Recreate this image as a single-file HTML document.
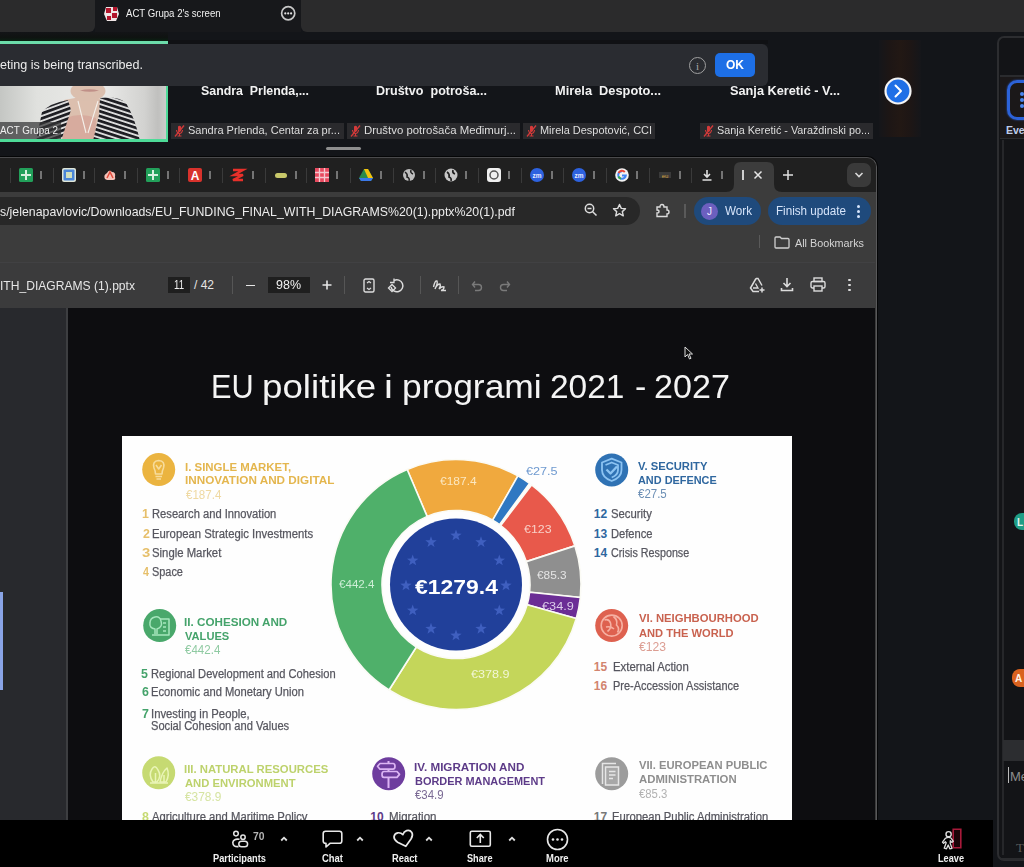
<!DOCTYPE html>
<html><head><meta charset="utf-8">
<style>
*{margin:0;padding:0;box-sizing:border-box}
html,body{width:1024px;height:867px;overflow:hidden;background:#131519;font-family:"Liberation Sans",sans-serif;position:relative}
.a{position:absolute}
.t{position:absolute;white-space:pre}
svg{position:absolute;overflow:visible}
</style></head><body>
<div class="a" style="left:0;top:0;width:95px;height:32px;background:#2b2b2c;border-radius:0 0 6px 0"></div>
<div class="a" style="left:95px;top:0;width:206px;height:32px;background:#17181b"></div>
<div class="a" style="left:301px;top:0;width:723px;height:32px;background:#2b2b2c;border-radius:0 0 0 6px"></div>
<svg style="left:103px;top:5px" width="17" height="18" viewBox="0 0 17 18">
<path d="M3 2 L14 2 L16 9 L13 16 L4 16 L1 9 Z" fill="#f0e6e6"/>
<rect x="3" y="3" width="5" height="5" fill="#b3152c"/><rect x="9" y="8" width="5" height="5" fill="#b3152c"/>
<rect x="4" y="11" width="4" height="4" fill="#b3152c"/><rect x="10" y="2" width="4" height="4" fill="#b3152c"/>
</svg>
<svg style="left:280px;top:5px" width="17" height="17" viewBox="0 0 17 17"><circle cx="8.2" cy="8.3" r="6.6" fill="none" stroke="#c8c8c8" stroke-width="1.7"/><circle cx="5.3" cy="8.4" r="1.1" fill="#e0e0e0"/><circle cx="8.2" cy="8.4" r="1.1" fill="#e0e0e0"/><circle cx="11.1" cy="8.4" r="1.1" fill="#e0e0e0"/></svg>
<div class="a" style="left:168px;top:40px;width:600px;height:4px;background:#101114"></div>
<div class="a" style="left:0;top:41px;width:168px;height:101px;overflow:hidden"><div class="a" style="left:0;top:0;width:168px;height:101px;filter:blur(0.6px)"><svg style="left:0;top:0" width="168" height="101" viewBox="0 41 168 101">
<defs>
<linearGradient id="vbg" x1="0" x2="1" y1="0" y2="0"><stop offset="0" stop-color="#c4c6c3"/><stop offset="0.22" stop-color="#e0e1de"/><stop offset="0.6" stop-color="#ebebe9"/><stop offset="0.86" stop-color="#d2d2d0"/><stop offset="0.94" stop-color="#c0c0be"/><stop offset="1" stop-color="#cfcfcd"/></linearGradient>
<pattern id="strL" width="6" height="4.6" patternUnits="userSpaceOnUse" patternTransform="rotate(-20)"><rect width="6" height="4.6" fill="#dcdcdc"/><rect width="6" height="2.7" fill="#1c1c21"/></pattern>
<pattern id="strR" width="6" height="4.6" patternUnits="userSpaceOnUse" patternTransform="rotate(18)"><rect width="6" height="4.6" fill="#dcdcdc"/><rect width="6" height="2.7" fill="#1c1c21"/></pattern>
</defs>
<rect x="0" y="41" width="168" height="101" fill="url(#vbg)"/>
<path d="M64 100 Q84 95 103 99 L97 141 L58 141 Z" fill="#dcbfae"/>
<path d="M66 118 Q80 112 96 118 L95 141 L62 141 Z" fill="#d7ab9e"/>
<ellipse cx="88" cy="91" rx="17.5" ry="10" fill="#dbbfae"/>
<path d="M80 90.5 Q89 88 99 90.5 Q90 93 80 90.5 Z" fill="#c09088"/>
<path d="M36 141 L42 112 Q50 103 68 100 L71 110 L61 141 Z" fill="url(#strL)"/>
<path d="M100 98 Q118 96 126 103 Q135 118 140 141 L93 141 L99 115 Z" fill="url(#strR)"/>
<path d="M78 101 L86 133 M98 101 L88 133" fill="none" stroke="#f4f0ea" stroke-width="1.1"/>
</svg></div></div>
<div class="a" style="left:0;top:122px;width:61px;height:17px;background:rgba(52,52,54,0.72)"></div>
<div class="a" style="left:0;top:32px;width:168px;height:9px;background:linear-gradient(180deg,#131417,#0f1311 60%,#0a2012)"></div>
<div class="a" style="left:166px;top:41px;width:2px;height:101px;background:#4ddb98"></div>
<div class="a" style="left:0;top:40.5px;width:168px;height:3.5px;background:#6cdcaa"></div>
<div class="a" style="left:0;top:139px;width:168px;height:3px;background:#4ddb98"></div>
<div class="a" style="left:0;top:44px;width:768px;height:42px;background:#2a2c31;border-radius:0 6px 6px 0"></div>
<div class="a" style="left:689px;top:57px;width:17px;height:17px;border-radius:50%;border:1.5px solid #a0a0a0"></div>
<div class="a" style="left:715px;top:53px;width:40px;height:24px;border-radius:5px;background:#1d6fe6"></div>
<div class="a" style="left:879px;top:40px;width:42px;height:97px;background:linear-gradient(90deg,#15161a,#1d1615 25%,#221814 50%,#1d1615 75%,#15161a)"></div>
<svg style="left:884px;top:77px" width="28" height="28" viewBox="0 0 28 28">
<circle cx="14" cy="14" r="12.5" fill="#1f6fe6" stroke="#f4f4f4" stroke-width="2.2"/>
<path d="M11.5 8.5 L17 14 L11.5 19.5" fill="none" stroke="#fff" stroke-width="2" stroke-linecap="round" stroke-linejoin="round"/>
</svg>
<div class="a" style="left:171px;top:123px;width:173px;height:16px;background:#2a2a2d"></div>
<svg style="left:173px;top:124px" width="13" height="14" viewBox="0 0 13 14">
<path d="M5 2.5 Q6.5 1 8 2.5 L8 7 Q6.5 8.5 5 7 Z" fill="#d43a3a"/>
<path d="M3.5 6 Q4 9.5 6.5 9.5 Q9 9.5 9.5 6 M6.5 9.5 L6.5 12 M4.5 12 L8.5 12" fill="none" stroke="#d43a3a" stroke-width="1.1"/>
<path d="M2 12.5 L11 1.5" stroke="#d43a3a" stroke-width="1.3"/>
</svg>
<div class="a" style="left:347px;top:123px;width:173px;height:16px;background:#2a2a2d"></div>
<svg style="left:349px;top:124px" width="13" height="14" viewBox="0 0 13 14">
<path d="M5 2.5 Q6.5 1 8 2.5 L8 7 Q6.5 8.5 5 7 Z" fill="#d43a3a"/>
<path d="M3.5 6 Q4 9.5 6.5 9.5 Q9 9.5 9.5 6 M6.5 9.5 L6.5 12 M4.5 12 L8.5 12" fill="none" stroke="#d43a3a" stroke-width="1.1"/>
<path d="M2 12.5 L11 1.5" stroke="#d43a3a" stroke-width="1.3"/>
</svg>
<div class="a" style="left:523px;top:123px;width:132px;height:16px;background:#2a2a2d"></div>
<svg style="left:525px;top:124px" width="13" height="14" viewBox="0 0 13 14">
<path d="M5 2.5 Q6.5 1 8 2.5 L8 7 Q6.5 8.5 5 7 Z" fill="#d43a3a"/>
<path d="M3.5 6 Q4 9.5 6.5 9.5 Q9 9.5 9.5 6 M6.5 9.5 L6.5 12 M4.5 12 L8.5 12" fill="none" stroke="#d43a3a" stroke-width="1.1"/>
<path d="M2 12.5 L11 1.5" stroke="#d43a3a" stroke-width="1.3"/>
</svg>
<div class="a" style="left:700px;top:123px;width:173px;height:16px;background:#2a2a2d"></div>
<svg style="left:702px;top:124px" width="13" height="14" viewBox="0 0 13 14">
<path d="M5 2.5 Q6.5 1 8 2.5 L8 7 Q6.5 8.5 5 7 Z" fill="#d43a3a"/>
<path d="M3.5 6 Q4 9.5 6.5 9.5 Q9 9.5 9.5 6 M6.5 9.5 L6.5 12 M4.5 12 L8.5 12" fill="none" stroke="#d43a3a" stroke-width="1.1"/>
<path d="M2 12.5 L11 1.5" stroke="#d43a3a" stroke-width="1.3"/>
</svg>
<div class="a" style="left:326px;top:147px;width:35px;height:3px;border-radius:2px;background:#8e8e8e"></div>
<div class="a" style="left:997px;top:36px;width:30px;height:825px;border:2px solid #2c2d30;border-right:none;border-radius:7px 0 0 7px;background:#131417"></div>
<div class="a" style="left:1002px;top:140px;width:1.5px;height:715px;background:#26272a"></div>
<div class="a" style="left:1000px;top:75px;width:24px;height:1.5px;background:#2a2b2e"></div>
<div class="a" style="left:1000px;top:137px;width:24px;height:2px;background:#2a2b2e"></div>
<div class="a" style="left:1000px;top:77px;width:24px;height:61px;background:#1b1819"></div>
<div class="a" style="left:1007px;top:80px;width:26px;height:40px;border-radius:10px;border:3px solid #2c62d8;box-shadow:0 0 2px #2c62d8"></div>
<div class="a" style="left:1020px;top:92px;width:4px;height:4px;border-radius:2px;background:#4a86f0"></div><div class="a" style="left:1020px;top:98px;width:4px;height:4px;border-radius:2px;background:#4a86f0"></div><div class="a" style="left:1020px;top:104px;width:4px;height:4px;border-radius:2px;background:#4a86f0"></div>
<div class="a" style="left:1014px;top:513px;width:20px;height:17px;border-radius:8px;background:#1f9e86"></div>
<div class="a" style="left:1012px;top:669px;width:20px;height:18px;border-radius:8px;background:#d9621f"></div>
<div class="a" style="left:1003px;top:740px;width:21px;height:21px;background:#2c2d30"></div>
<div class="a" style="left:1008px;top:767px;width:1.2px;height:16px;background:#bbb"></div>
<div class="a" style="left:1000px;top:858px;width:24px;height:2px;background:#2a2b2e"></div>
<div class="a" style="left:0;top:156px;width:878px;height:664px;background:#000;border-radius:0 11px 0 0;opacity:0.7"></div>
<div class="a" style="left:0;top:157px;width:877px;height:663px;background:#3c3c3c;border-top:1px solid #4a4a4c;border-right:1.5px solid #58585a;border-radius:0 10px 0 0"></div>
<div class="a" style="left:0;top:158px;width:875.5px;height:34px;background:#202020;border-radius:0 9px 0 0"></div>
<div class="a" style="left:10px;top:168px;width:1px;height:15px;background:#3a3a3a"></div>
<div class="a" style="left:53px;top:168px;width:1px;height:15px;background:#3a3a3a"></div>
<div class="a" style="left:94px;top:168px;width:1px;height:15px;background:#3a3a3a"></div>
<div class="a" style="left:137px;top:168px;width:1px;height:15px;background:#3a3a3a"></div>
<div class="a" style="left:179px;top:168px;width:1px;height:15px;background:#3a3a3a"></div>
<div class="a" style="left:222px;top:168px;width:1px;height:15px;background:#3a3a3a"></div>
<div class="a" style="left:265px;top:168px;width:1px;height:15px;background:#3a3a3a"></div>
<div class="a" style="left:306px;top:168px;width:1px;height:15px;background:#3a3a3a"></div>
<div class="a" style="left:350px;top:168px;width:1px;height:15px;background:#3a3a3a"></div>
<div class="a" style="left:393px;top:168px;width:1px;height:15px;background:#3a3a3a"></div>
<div class="a" style="left:435px;top:168px;width:1px;height:15px;background:#3a3a3a"></div>
<div class="a" style="left:478px;top:168px;width:1px;height:15px;background:#3a3a3a"></div>
<div class="a" style="left:521px;top:168px;width:1px;height:15px;background:#3a3a3a"></div>
<div class="a" style="left:563px;top:168px;width:1px;height:15px;background:#3a3a3a"></div>
<div class="a" style="left:606px;top:168px;width:1px;height:15px;background:#3a3a3a"></div>
<div class="a" style="left:649px;top:168px;width:1px;height:15px;background:#3a3a3a"></div>
<div class="a" style="left:691px;top:168px;width:1px;height:15px;background:#3a3a3a"></div>
<svg style="left:19.0px;top:168.0px" width="14" height="14" viewBox="0 0 14 14"><rect x="0" y="0" width="14" height="14" rx="1.5" fill="#22a05a"/><rect x="6" y="2" width="2" height="10" fill="#d8f0de"/><rect x="2" y="6" width="10" height="2" fill="#d8f0de"/></svg>
<svg style="left:62.0px;top:168.0px" width="14" height="14" viewBox="0 0 14 14"><rect x="0" y="0" width="14" height="14" rx="2" fill="#dfe6d8"/><rect x="1.5" y="1.5" width="11" height="11" rx="1" fill="#4a86d8"/><rect x="4" y="4" width="6" height="6" fill="#cfe0c0"/></svg>
<svg style="left:103.0px;top:168.0px" width="14" height="14" viewBox="0 0 14 14"><path d="M2 11 Q0 7 4 5 Q6 1 9 4 Q13 4 12 9 Q13 12 10 12 L4 12 Z" fill="#f6c2b8"/><path d="M4 10 L7 4 L10 10" stroke="#e24b3b" stroke-width="1.5" fill="none"/></svg>
<svg style="left:146.0px;top:168.0px" width="14" height="14" viewBox="0 0 14 14"><rect x="0" y="0" width="14" height="14" rx="1.5" fill="#22a05a"/><rect x="6" y="2" width="2" height="10" fill="#d8f0de"/><rect x="2" y="6" width="10" height="2" fill="#d8f0de"/></svg>
<svg style="left:188.0px;top:168.0px" width="14" height="14" viewBox="0 0 14 14"><rect x="0" y="0" width="14" height="14" rx="2" fill="#d8322c"/><text x="7" y="12" font-family="Liberation Sans" font-weight="bold" font-size="12" fill="#fff" text-anchor="middle">A</text></svg>
<svg style="left:231.0px;top:168.0px" width="14" height="14" viewBox="0 0 14 14"><path d="M2 2 L12 2 L3 7 L12 7 L2 12 L12 12" stroke="#e8302a" stroke-width="2.4" fill="none"/></svg>
<svg style="left:274.0px;top:168.0px" width="14" height="14" viewBox="0 0 14 14"><rect x="1" y="5" width="12" height="5" rx="2.5" fill="#c8c86a"/></svg>
<svg style="left:315.0px;top:168.0px" width="14" height="14" viewBox="0 0 14 14"><rect x="0" y="0" width="14" height="14" fill="#e84a5f"/><path d="M0 4.5H14M0 9.5H14M4.5 0V14M9.5 0V14" stroke="#f4c8cf" stroke-width="1.3"/></svg>
<svg style="left:359.0px;top:168.0px" width="14" height="14" viewBox="0 0 14 14"><path d="M5 1 L9 1 L14 10 L12 13 L2 13 L0 10 Z" fill="#2a8a4a"/><path d="M5 1 L9 1 L14 10 L9 10 Z" fill="#f4c20d"/><path d="M0 10 L14 10 L12 13 L2 13 Z" fill="#3b78e7"/></svg>
<svg style="left:402.0px;top:168.0px" width="14" height="14" viewBox="0 0 14 14"><circle cx="7" cy="7" r="6" fill="#bdbdbd"/><path d="M3 4 Q6 6 5 9 Q8 10 7 13 M9 2 Q8 5 11 6" stroke="#202020" stroke-width="1.5" fill="none"/></svg>
<svg style="left:444.0px;top:168.0px" width="14" height="14" viewBox="0 0 14 14"><circle cx="7" cy="7" r="6.5" fill="#c8c8c8"/><path d="M3 4 Q6 6 5 9 Q8 10 7 13 M9 2 Q8 5 11 6" stroke="#202020" stroke-width="1.6" fill="none"/></svg>
<svg style="left:487.0px;top:168.0px" width="14" height="14" viewBox="0 0 14 14"><rect x="0" y="0" width="14" height="14" rx="3" fill="#f0f0f0"/><circle cx="7" cy="7" r="4" fill="none" stroke="#555" stroke-width="1.5"/></svg>
<svg style="left:530.0px;top:168.0px" width="14" height="14" viewBox="0 0 14 14"><circle cx="7" cy="7" r="7" fill="#2d62e0"/><text x="7" y="9.5" font-family="Liberation Sans" font-size="6.5" font-weight="bold" fill="#e6ecff" text-anchor="middle">zm</text></svg>
<svg style="left:572.0px;top:168.0px" width="14" height="14" viewBox="0 0 14 14"><circle cx="7" cy="7" r="7" fill="#2d62e0"/><text x="7" y="9.5" font-family="Liberation Sans" font-size="6.5" font-weight="bold" fill="#e6ecff" text-anchor="middle">zm</text></svg>
<svg style="left:615.0px;top:168.0px" width="14" height="14" viewBox="0 0 14 14"><circle cx="7" cy="7" r="6.8" fill="#f2f2f2"/><path d="M7 3.2 A3.8 3.8 0 1 0 10.8 7.5 L7 7.5" stroke="#4285f4" stroke-width="2" fill="none"/><path d="M3.6 5 A3.8 3.8 0 0 1 9.8 4" stroke="#ea4335" stroke-width="2" fill="none"/><path d="M3.4 8.5 A3.8 3.8 0 0 0 6 10.7" stroke="#34a853" stroke-width="2" fill="none"/></svg>
<svg style="left:658.0px;top:168.0px" width="14" height="14" viewBox="0 0 14 14"><rect x="1" y="4" width="12" height="6" fill="#3a3a3a"/><text x="7" y="9.5" font-family="Liberation Sans" font-size="6" fill="#d4a040" text-anchor="middle">eu</text></svg>
<svg style="left:700.0px;top:168.0px" width="14" height="14" viewBox="0 0 14 14"><path d="M7 2 L7 9 M4 6 L7 9 L10 6 M2.5 12 L11.5 12" stroke="#e0e0e0" stroke-width="1.6" fill="none"/></svg>
<div class="a" style="left:40px;top:171px;width:1.5px;height:8px;background:#8a8a8a;opacity:0.8"></div>
<div class="a" style="left:83px;top:171px;width:1.5px;height:8px;background:#8a8a8a;opacity:0.8"></div>
<div class="a" style="left:124px;top:171px;width:1.5px;height:8px;background:#8a8a8a;opacity:0.8"></div>
<div class="a" style="left:167px;top:171px;width:1.5px;height:8px;background:#8a8a8a;opacity:0.8"></div>
<div class="a" style="left:209px;top:171px;width:1.5px;height:8px;background:#8a8a8a;opacity:0.8"></div>
<div class="a" style="left:252px;top:171px;width:1.5px;height:8px;background:#8a8a8a;opacity:0.8"></div>
<div class="a" style="left:295px;top:171px;width:1.5px;height:8px;background:#8a8a8a;opacity:0.8"></div>
<div class="a" style="left:336px;top:171px;width:1.5px;height:8px;background:#8a8a8a;opacity:0.8"></div>
<div class="a" style="left:380px;top:171px;width:1.5px;height:8px;background:#8a8a8a;opacity:0.8"></div>
<div class="a" style="left:423px;top:171px;width:1.5px;height:8px;background:#8a8a8a;opacity:0.8"></div>
<div class="a" style="left:465px;top:171px;width:1.5px;height:8px;background:#8a8a8a;opacity:0.8"></div>
<div class="a" style="left:508px;top:171px;width:1.5px;height:8px;background:#8a8a8a;opacity:0.8"></div>
<div class="a" style="left:551px;top:171px;width:1.5px;height:8px;background:#8a8a8a;opacity:0.8"></div>
<div class="a" style="left:593px;top:171px;width:1.5px;height:8px;background:#8a8a8a;opacity:0.8"></div>
<div class="a" style="left:636px;top:171px;width:1.5px;height:8px;background:#8a8a8a;opacity:0.8"></div>
<div class="a" style="left:679px;top:171px;width:1.5px;height:8px;background:#8a8a8a;opacity:0.8"></div>
<div class="a" style="left:721px;top:171px;width:1.5px;height:8px;background:#8a8a8a;opacity:0.8"></div>
<svg style="left:726px;top:161px" width="56" height="31" viewBox="0 0 56 31"><path d="M0 31 Q8 31 8 23 L8 8 Q8 1 15 1 L41 1 Q48 1 48 8 L48 23 Q48 31 56 31 Z" fill="#3c3c3c"/></svg>
<div class="a" style="left:742px;top:170px;width:1.6px;height:10px;background:#d0d0d0"></div>
<svg style="left:753px;top:170px" width="10" height="10" viewBox="0 0 10 10"><path d="M1.5 1.5L8.5 8.5M8.5 1.5L1.5 8.5" stroke="#e6e6e6" stroke-width="1.5"/></svg>
<svg style="left:782px;top:169px" width="12" height="12" viewBox="0 0 12 12"><path d="M6 1V11M1 6H11" stroke="#e0e0e0" stroke-width="1.5"/></svg>
<div class="a" style="left:847px;top:163px;width:24px;height:24px;border-radius:7px;background:#3a3a3a"></div>
<svg style="left:854px;top:171px" width="10" height="8" viewBox="0 0 10 8"><path d="M1.5 2L5 5.5L8.5 2" stroke="#d8d8d8" stroke-width="1.6" fill="none"/></svg>
<div class="a" style="left:0;top:197px;width:640px;height:28px;background:#282828;border-radius:0 14px 14px 0"></div>
<svg style="left:584px;top:203px" width="14" height="14" viewBox="0 0 14 14"><circle cx="5.5" cy="5.5" r="4.2" stroke="#dcdcdc" stroke-width="1.5" fill="none"/><path d="M8.7 8.7L12.5 12.5M3.5 5.5H7.5" stroke="#dcdcdc" stroke-width="1.5"/></svg>
<svg style="left:612px;top:203px" width="15" height="15" viewBox="0 0 15 15"><path d="M7.5 1.5L9.3 5.4L13.5 5.8L10.3 8.6L11.3 12.8L7.5 10.6L3.7 12.8L4.7 8.6L1.5 5.8L5.7 5.4Z" stroke="#dcdcdc" stroke-width="1.4" fill="none" stroke-linejoin="round"/></svg>
<svg style="left:655px;top:203px" width="15" height="15" viewBox="0 0 15 15"><path d="M2 4H5Q5 1.5 7 1.5Q9 1.5 9 4H12V7Q14 7 14 9Q14 11 12 11V13.5H2V10Q4 10 4 8.5Q4 7 2 7Z" stroke="#dcdcdc" stroke-width="1.4" fill="none"/></svg>
<div class="a" style="left:684px;top:204px;width:1.5px;height:14px;background:#5a5a5a"></div>
<div class="a" style="left:694px;top:197px;width:67px;height:28px;border-radius:14px;background:#1f4a7c"></div>
<div class="a" style="left:701px;top:203px;width:17px;height:17px;border-radius:50%;background:#6c5fbf"></div>
<div class="a" style="left:768px;top:197px;width:103px;height:28px;border-radius:14px;background:#1f4a7c"></div>
<div class="a" style="left:857px;top:205px;width:2.5px;height:2.5px;border-radius:2px;background:#d6e4fa"></div><div class="a" style="left:857px;top:210px;width:2.5px;height:2.5px;border-radius:2px;background:#d6e4fa"></div><div class="a" style="left:857px;top:215px;width:2.5px;height:2.5px;border-radius:2px;background:#d6e4fa"></div>
<div class="a" style="left:759px;top:235px;width:1.3px;height:13px;background:#5a5a5a"></div>
<svg style="left:774px;top:236px" width="16" height="13" viewBox="0 0 16 13"><path d="M1 2Q1 1 2 1H6L7.5 2.5H14Q15 2.5 15 3.5V11Q15 12 14 12H2Q1 12 1 11Z" stroke="#cfcfcf" stroke-width="1.3" fill="none"/></svg>
<div class="a" style="left:0;top:262px;width:875px;height:46px;background:#3b3b3c;border-top:1px solid #414143"></div>
<div class="a" style="left:168px;top:277px;width:22px;height:16px;background:#1f1f1f"></div>
<div class="a" style="left:232px;top:276px;width:1.3px;height:18px;background:#565656"></div>
<div class="a" style="left:344px;top:276px;width:1.3px;height:18px;background:#565656"></div>
<div class="a" style="left:420px;top:276px;width:1.3px;height:18px;background:#565656"></div>
<div class="a" style="left:458px;top:276px;width:1.3px;height:18px;background:#565656"></div>
<div class="a" style="left:245.5px;top:284.5px;width:9px;height:1.6px;background:#e6e6e6"></div>
<div class="a" style="left:268px;top:277px;width:42px;height:16px;background:#1f1f1f"></div>
<svg style="left:322px;top:280px" width="10" height="10" viewBox="0 0 10 10"><path d="M5 0.5V9.5M0.5 5H9.5" stroke="#e6e6e6" stroke-width="1.6"/></svg>
<svg style="left:363px;top:278px" width="12" height="15" viewBox="0 0 12 15"><rect x="1" y="1" width="10" height="13" rx="1.5" stroke="#dcdcdc" stroke-width="1.4" fill="none"/><path d="M4 5L6 3.5L8 5M4 10L6 11.5L8 10" stroke="#dcdcdc" stroke-width="1.2" fill="none"/></svg>
<svg style="left:388px;top:278px" width="16" height="15" viewBox="0 0 16 15"><path d="M6 2.5A6 6 0 1 1 3 9" stroke="#dcdcdc" stroke-width="1.5" fill="none"/><path d="M6 0.5V4.5H2" stroke="#dcdcdc" stroke-width="1.3" fill="none"/><rect x="1.5" y="7.5" width="5" height="5" transform="rotate(45 4 10)" stroke="#dcdcdc" stroke-width="1.3" fill="none"/></svg>
<svg style="left:432px;top:278px" width="15" height="15" viewBox="0 0 15 15"><path d="M1.5 9Q3 2 5 3Q6 5 3 11Q5 6 8 6Q9 8 7 11Q10 8 12 9Q12 12 9 12.5L14 12.5" stroke="#dcdcdc" stroke-width="1.4" fill="none"/></svg>
<svg style="left:471px;top:280px" width="12" height="11" viewBox="0 0 12 11"><path d="M1.5 4.5H7.5A3 3 0 0 1 7.5 10.5H4M4 1.5L1.5 4.5L4 7.5" stroke="#7a7a7a" stroke-width="1.4" fill="none"/></svg>
<svg style="left:499px;top:280px" width="12" height="11" viewBox="0 0 12 11"><path d="M10.5 4.5H4.5A3 3 0 0 0 4.5 10.5H8M8 1.5L10.5 4.5L8 7.5" stroke="#7a7a7a" stroke-width="1.4" fill="none"/></svg>
<svg style="left:749px;top:277px" width="17" height="16" viewBox="0 0 17 16"><path d="M7 1.5L1.5 11L4 14.5H10" stroke="#dcdcdc" stroke-width="1.5" fill="none"/><path d="M7 1.5H9L13 8.5" stroke="#dcdcdc" stroke-width="1.5" fill="none"/><path d="M4 11H9L6.5 6.5" stroke="#dcdcdc" stroke-width="1.3" fill="none"/><path d="M13 10.5V15.5M10.5 13H15.5" stroke="#dcdcdc" stroke-width="1.5"/></svg>
<svg style="left:780px;top:277px" width="14" height="15" viewBox="0 0 14 15"><path d="M7 1V9.5M3.5 6L7 9.5L10.5 6" stroke="#dcdcdc" stroke-width="1.6" fill="none"/><path d="M1.5 11V13.5H12.5V11" stroke="#dcdcdc" stroke-width="1.6" fill="none"/></svg>
<svg style="left:810px;top:277px" width="16" height="15" viewBox="0 0 16 15"><rect x="4" y="1" width="8" height="3.5" stroke="#dcdcdc" stroke-width="1.4" fill="none"/><rect x="1" y="4.5" width="14" height="6.5" rx="1.5" stroke="#dcdcdc" stroke-width="1.4" fill="none"/><rect x="4" y="9" width="8" height="5" stroke="#dcdcdc" stroke-width="1.4" fill="#3a3a3a"/></svg>
<div class="a" style="left:848px;top:278.5px;width:2.5px;height:2.5px;border-radius:2px;background:#dcdcdc"></div><div class="a" style="left:848px;top:283.5px;width:2.5px;height:2.5px;border-radius:2px;background:#dcdcdc"></div><div class="a" style="left:848px;top:288.5px;width:2.5px;height:2.5px;border-radius:2px;background:#dcdcdc"></div>
<div class="a" style="left:0;top:308px;width:68px;height:512px;background:#28292d"></div>
<div class="a" style="left:66px;top:308px;width:2px;height:512px;background:#3d3e41"></div>
<div class="a" style="left:68px;top:308px;width:807px;height:512px;background:#0d0d10"></div>
<div class="a" style="left:0;top:592px;width:3px;height:98px;background:#8aa4e6"></div>
<svg style="left:684px;top:346px" width="10" height="14" viewBox="0 0 10 14"><path d="M1 1L1 11L3.5 8.5L5.5 13L7 12.3L5 8L8.5 8Z" fill="#111" stroke="#ddd" stroke-width="1"/></svg>
<div class="a" style="left:122px;top:436px;width:670px;height:384px;background:#fefefe"></div>
<svg style="left:0;top:0" width="1024" height="867" viewBox="0 0 1024 867"><path d="M407.16 469.44 A125 125 0 0 1 517.93 475.92 L492.66 520.22 A74 74 0 0 0 427.09 516.38 Z" fill="#f0a93e" stroke="#fbfbf5" stroke-width="1.6"/><path d="M517.93 475.92 A125 125 0 0 1 529.47 483.37 L499.50 524.63 A74 74 0 0 0 492.66 520.22 Z" fill="#2f78c2" stroke="#fbfbf5" stroke-width="1.6"/><path d="M531.57 484.93 A125 125 0 0 1 574.88 545.87 L526.38 561.63 A74 74 0 0 0 500.74 525.56 Z" fill="#e8594b" stroke="#fbfbf5" stroke-width="1.6"/><path d="M574.88 545.87 A125 125 0 0 1 580.32 597.57 L529.59 592.24 A74 74 0 0 0 526.38 561.63 Z" fill="#8f8f8f" stroke="#fbfbf5" stroke-width="1.6"/><path d="M580.32 597.57 A125 125 0 0 1 576.28 618.54 L527.20 604.65 A74 74 0 0 0 529.59 592.24 Z" fill="#6b2d95" stroke="#fbfbf5" stroke-width="1.6"/><path d="M576.28 618.54 A125 125 0 0 1 389.02 690.04 L416.35 646.98 A74 74 0 0 0 527.20 604.65 Z" fill="#c4d65a" stroke="#fbfbf5" stroke-width="1.6"/><path d="M389.02 690.04 A125 125 0 0 1 407.16 469.44 L427.09 516.38 A74 74 0 0 0 416.35 646.98 Z" fill="#4fb06a" stroke="#fbfbf5" stroke-width="1.6"/><circle cx="456" cy="584.5" r="66" fill="#21409a"/><polygon points="456.00,529.50 457.41,533.56 461.71,533.65 458.28,536.24 459.53,540.35 456.00,537.90 452.47,540.35 453.72,536.24 450.29,533.65 454.59,533.56" fill="#3f5fbf"/><polygon points="481.00,536.20 482.41,540.26 486.71,540.34 483.28,542.94 484.53,547.05 481.00,544.60 477.47,547.05 478.72,542.94 475.29,540.34 479.59,540.26" fill="#3f5fbf"/><polygon points="499.30,554.50 500.71,558.56 505.01,558.65 501.58,561.24 502.83,565.35 499.30,562.90 495.77,565.35 497.02,561.24 493.59,558.65 497.89,558.56" fill="#3f5fbf"/><polygon points="506.00,579.50 507.41,583.56 511.71,583.65 508.28,586.24 509.53,590.35 506.00,587.90 502.47,590.35 503.72,586.24 500.29,583.65 504.59,583.56" fill="#3f5fbf"/><polygon points="499.30,604.50 500.71,608.56 505.01,608.65 501.58,611.24 502.83,615.35 499.30,612.90 495.77,615.35 497.02,611.24 493.59,608.65 497.89,608.56" fill="#3f5fbf"/><polygon points="481.00,622.80 482.41,626.86 486.71,626.95 483.28,629.54 484.53,633.66 481.00,631.20 477.47,633.66 478.72,629.54 475.29,626.95 479.59,626.86" fill="#3f5fbf"/><polygon points="456.00,629.50 457.41,633.56 461.71,633.65 458.28,636.24 459.53,640.35 456.00,637.90 452.47,640.35 453.72,636.24 450.29,633.65 454.59,633.56" fill="#3f5fbf"/><polygon points="431.00,622.80 432.41,626.86 436.71,626.95 433.28,629.54 434.53,633.66 431.00,631.20 427.47,633.66 428.72,629.54 425.29,626.95 429.59,626.86" fill="#3f5fbf"/><polygon points="412.70,604.50 414.11,608.56 418.41,608.65 414.98,611.24 416.23,615.35 412.70,612.90 409.17,615.35 410.42,611.24 406.99,608.65 411.29,608.56" fill="#3f5fbf"/><polygon points="406.00,579.50 407.41,583.56 411.71,583.65 408.28,586.24 409.53,590.35 406.00,587.90 402.47,590.35 403.72,586.24 400.29,583.65 404.59,583.56" fill="#3f5fbf"/><polygon points="412.70,554.50 414.11,558.56 418.41,558.65 414.98,561.24 416.23,565.35 412.70,562.90 409.17,565.35 410.42,561.24 406.99,558.65 411.29,558.56" fill="#3f5fbf"/><polygon points="431.00,536.20 432.41,540.26 436.71,540.34 433.28,542.94 434.53,547.05 431.00,544.60 427.47,547.05 428.72,542.94 425.29,540.34 429.59,540.26" fill="#3f5fbf"/><circle cx="158.7" cy="469.6" r="16.5" fill="#ebb440"/><circle cx="159.7" cy="625.6" r="16.5" fill="#49a86b"/><circle cx="158.7" cy="772.8" r="16.5" fill="#c6da72"/><circle cx="388.7" cy="773.7" r="16.5" fill="#6e3d9e"/><circle cx="611.7" cy="469.9" r="16.5" fill="#2f72b4"/><circle cx="611.7" cy="625.6" r="16.5" fill="#de614f"/><circle cx="611.7" cy="773.7" r="16.5" fill="#9c9c9c"/><g fill="none" stroke="#f7dc9c" stroke-width="1.6" stroke-linejoin="round"><path d="M154 468 Q152 461 158.7 460.5 Q165.5 461 163.5 468 Q162 471 162 474 H155.5 Q155.5 471 154 468 Z"/><path d="M155.5 476.5 H162 M156.5 479 H161"/><path d="M156 465 L158.7 469 L161.5 465"/></g><g fill="none" stroke="#a6e6bd" stroke-width="1.5" stroke-linejoin="round"><path d="M155 634 V629 Q149 628 150 623 Q150 618 155 617 Q160 616 161 621 Q163 627 157 629 V634"/><path d="M160 619 H169 V635 H152"/><path d="M163 623 H166 M163 627 H166 M163 631 H166"/></g><g fill="none" stroke="#eaf5b8" stroke-width="1.5" stroke-linejoin="round"><path d="M153 782 Q148 775 152 769 Q155 764 158 770 Q162 776 157 782 Z"/><path d="M160 782 Q162 772 167 768 Q170 775 166 782 Z"/><path d="M150 783 H168 M155.5 773 V783 M164 775 V783"/></g><g fill="none" stroke="#dcb4f4" stroke-width="1.7" stroke-linejoin="round"><path d="M380 763.5 H393 Q395 763.5 395 766.3 Q395 769.2 393 769.2 H380 L377.5 766.3 Z"/><path d="M384 771.5 H397 L399.5 774.4 L397 777.4 H384 Q382 777.4 382 774.4 Q382 771.5 384 771.5 Z"/><path d="M388.5 761 V763.5 M388.5 769.2 V771.5 M388.5 777.4 V788" stroke-width="2"/></g><g fill="none" stroke="#8cc3f2" stroke-width="1.8" stroke-linejoin="round"><path d="M602 462.5 L611.7 458.6 L621.5 462.5 V470 Q621.5 477.5 611.7 481 Q602 477.5 602 470 Z"/><path d="M605.5 465 L611.7 462.5 L618 465 V470 Q618 475 611.7 477.5"/><path d="M606.5 469.5 L610.5 473.5 L617 466.5" stroke-width="2.3"/></g><g fill="none" stroke="#f6b0a2" stroke-width="1.6"><circle cx="611.7" cy="625.6" r="10.5"/><path d="M604.5 620 Q609 618.5 610.5 623 Q612 628 607.5 631.5 M613.5 616.5 Q618 620 616.5 625 Q620 628.5 617.5 632.5 M606 627 Q611 626 614 629"/></g><g fill="none" stroke="#e6e6e6" stroke-width="1.5"><path d="M602.5 784 V763.5 H616"/><rect x="605.5" y="767" width="13" height="18" fill="#a8a8a8"/><path d="M609 771.5 H615.5 M609 775 H615.5 M609 778.5 H613"/></g></svg>
<div class="t" style="left:125.5px;top:7.8px;font-size:11.5px;line-height:11.5px;font-family:'Liberation Sans',sans-serif;font-weight:normal;color:#f0f0f0;transform:scaleX(0.8363);transform-origin:0 0;">ACT Grupa 2's screen</div>
<div class="t" style="left:0.0px;top:124.7px;font-size:11.5px;line-height:11.5px;font-family:'Liberation Sans',sans-serif;font-weight:normal;color:#f0f0f0;transform:scaleX(0.8587);transform-origin:0 0;">ACT Grupa 2</div>
<div class="t" style="left:0.0px;top:57.8px;font-size:13.2px;line-height:13.2px;font-family:'Liberation Sans',sans-serif;font-weight:normal;color:#ececec;transform:scaleX(0.9515);transform-origin:0 0;">eting is being transcribed.</div>
<div class="t" style="left:696.0px;top:60.6px;font-size:11px;line-height:11px;font-family:'Liberation Serif',sans-serif;font-weight:normal;color:#a8a8a8;">i</div>
<div class="t" style="left:726.0px;top:59.4px;font-size:12.5px;line-height:12.5px;font-family:'Liberation Sans',sans-serif;font-weight:bold;color:#fff;transform:scaleX(0.9600);transform-origin:0 0;">OK</div>
<div class="t" style="left:201.0px;top:85.0px;font-size:12.3px;line-height:12.3px;font-family:'Liberation Sans',sans-serif;font-weight:bold;color:#f2f2f2;transform:scaleX(1.0066);transform-origin:0 0;">Sandra  Prlenda,...</div>
<div class="t" style="left:376.0px;top:85.0px;font-size:12.3px;line-height:12.3px;font-family:'Liberation Sans',sans-serif;font-weight:bold;color:#f2f2f2;transform:scaleX(1.0217);transform-origin:0 0;">Društvo  potroša...</div>
<div class="t" style="left:555.0px;top:85.0px;font-size:12.3px;line-height:12.3px;font-family:'Liberation Sans',sans-serif;font-weight:bold;color:#f2f2f2;transform:scaleX(1.0411);transform-origin:0 0;">Mirela  Despoto...</div>
<div class="t" style="left:729.5px;top:85.0px;font-size:12.3px;line-height:12.3px;font-family:'Liberation Sans',sans-serif;font-weight:bold;color:#f2f2f2;transform:scaleX(1.0361);transform-origin:0 0;">Sanja Keretić - V...</div>
<div class="t" style="left:188.0px;top:125.0px;font-size:11.2px;line-height:11.2px;font-family:'Liberation Sans',sans-serif;font-weight:normal;color:#dedede;transform:scaleX(0.9855);transform-origin:0 0;">Sandra Prlenda, Centar za pr...</div>
<div class="t" style="left:364.0px;top:125.0px;font-size:11.2px;line-height:11.2px;font-family:'Liberation Sans',sans-serif;font-weight:normal;color:#dedede;transform:scaleX(1.0186);transform-origin:0 0;">Društvo potrošača Međimurj...</div>
<div class="t" style="left:540.0px;top:125.0px;font-size:11.2px;line-height:11.2px;font-family:'Liberation Sans',sans-serif;font-weight:normal;color:#dedede;transform:scaleX(0.9790);transform-origin:0 0;">Mirela Despotović, CCI</div>
<div class="t" style="left:717.0px;top:125.0px;font-size:11.2px;line-height:11.2px;font-family:'Liberation Sans',sans-serif;font-weight:normal;color:#dedede;transform:scaleX(0.9662);transform-origin:0 0;">Sanja Keretić - Varaždinski po...</div>
<div class="t" style="left:1006.0px;top:125.1px;font-size:10.5px;line-height:10.5px;font-family:'Liberation Sans',sans-serif;font-weight:bold;color:#bfcdeb;">Events</div>
<div class="t" style="left:1017.0px;top:517.5px;font-size:10px;line-height:10px;font-family:'Liberation Sans',sans-serif;font-weight:bold;color:#e8f5f0;">L</div>
<div class="t" style="left:1015.0px;top:673.5px;font-size:10px;line-height:10px;font-family:'Liberation Sans',sans-serif;font-weight:bold;color:#fff3e8;">A</div>
<div class="t" style="left:1010.0px;top:770.0px;font-size:13px;line-height:13px;font-family:'Liberation Sans',sans-serif;font-weight:normal;color:#8d8d8d;">Me</div>
<div class="t" style="left:1016.0px;top:841.0px;font-size:13px;line-height:13px;font-family:'Liberation Serif',sans-serif;font-weight:normal;color:#5a5a5a;">T</div>
<div class="t" style="left:-0.4px;top:204.9px;font-size:13.6px;line-height:13.6px;font-family:'Liberation Sans',sans-serif;font-weight:normal;color:#ececec;transform:scaleX(0.9074);transform-origin:0 0;">s/jelenapavlovic/Downloads/EU_FUNDING_FINAL_WITH_DIAGRAMS%20(1).pptx%20(1).pdf</div>
<div class="t" style="left:707.0px;top:207.0px;font-size:10px;line-height:10px;font-family:'Liberation Sans',sans-serif;font-weight:normal;color:#ecebff;">J</div>
<div class="t" style="left:724.5px;top:205.4px;font-size:12.5px;line-height:12.5px;font-family:'Liberation Sans',sans-serif;font-weight:normal;color:#d6e4fa;transform:scaleX(0.9330);transform-origin:0 0;">Work</div>
<div class="t" style="left:776.0px;top:205.4px;font-size:12.5px;line-height:12.5px;font-family:'Liberation Sans',sans-serif;font-weight:normal;color:#d6e4fa;transform:scaleX(0.9326);transform-origin:0 0;">Finish update</div>
<div class="t" style="left:795.0px;top:237.7px;font-size:11px;line-height:11px;font-family:'Liberation Sans',sans-serif;font-weight:normal;color:#d4d4d4;transform:scaleX(0.9816);transform-origin:0 0;">All Bookmarks</div>
<div class="t" style="left:0.0px;top:278.9px;font-size:13px;line-height:13px;font-family:'Liberation Sans',sans-serif;font-weight:normal;color:#e6e6e6;transform:scaleX(0.9297);transform-origin:0 0;">ITH_DIAGRAMS (1).pptx</div>
<div class="t" style="left:174.0px;top:279.3px;font-size:12px;line-height:12px;font-family:'Liberation Sans',sans-serif;font-weight:normal;color:#f0f0f0;transform:scaleX(0.8020);transform-origin:0 0;">11</div>
<div class="t" style="left:194.0px;top:279.3px;font-size:12px;line-height:12px;font-family:'Liberation Sans',sans-serif;font-weight:normal;color:#e6e6e6;">/ 42</div>
<div class="t" style="left:275.5px;top:279.3px;font-size:12px;line-height:12px;font-family:'Liberation Sans',sans-serif;font-weight:normal;color:#f0f0f0;transform:scaleX(1.0403);transform-origin:0 0;">98%</div>
<div class="t" style="left:211.4px;top:370.7px;font-size:32.5px;line-height:32.5px;font-family:'Liberation Sans',sans-serif;font-weight:normal;color:#f4f4f4;transform:scaleX(0.9450);transform-origin:0 0;">EU</div>
<div class="t" style="left:262.0px;top:370.7px;font-size:32.5px;line-height:32.5px;font-family:'Liberation Sans',sans-serif;font-weight:normal;color:#f4f4f4;transform:scaleX(1.1296);transform-origin:0 0;">politike</div>
<div class="t" style="left:384.0px;top:370.7px;font-size:32.5px;line-height:32.5px;font-family:'Liberation Sans',sans-serif;font-weight:normal;color:#f4f4f4;transform:scaleX(1.2333);transform-origin:0 0;">i</div>
<div class="t" style="left:401.5px;top:370.7px;font-size:32.5px;line-height:32.5px;font-family:'Liberation Sans',sans-serif;font-weight:normal;color:#f4f4f4;transform:scaleX(1.0895);transform-origin:0 0;">programi</div>
<div class="t" style="left:550.4px;top:370.7px;font-size:32.5px;line-height:32.5px;font-family:'Liberation Sans',sans-serif;font-weight:normal;color:#f4f4f4;transform:scaleX(1.0304);transform-origin:0 0;">2021</div>
<div class="t" style="left:635.0px;top:370.7px;font-size:32.5px;line-height:32.5px;font-family:'Liberation Sans',sans-serif;font-weight:normal;color:#f4f4f4;transform:scaleX(1.0444);transform-origin:0 0;">-</div>
<div class="t" style="left:654.3px;top:370.7px;font-size:32.5px;line-height:32.5px;font-family:'Liberation Sans',sans-serif;font-weight:normal;color:#f4f4f4;transform:scaleX(1.0493);transform-origin:0 0;">2027</div>
<div class="t" style="left:415.0px;top:576.1px;font-size:21px;line-height:21px;font-family:'Liberation Sans',sans-serif;font-weight:bold;color:#ffffff;transform:scaleX(1.0921);transform-origin:0 0;">€1279.4</div>
<div class="t" style="left:440.0px;top:475.6px;font-size:11px;line-height:11px;font-family:'Liberation Sans',sans-serif;font-weight:normal;color:#fbe7c0;transform:scaleX(1.0882);transform-origin:0 0;">€187.4</div>
<div class="t" style="left:526.0px;top:466.1px;font-size:11px;line-height:11px;font-family:'Liberation Sans',sans-serif;font-weight:normal;color:#6f9ad0;transform:scaleX(1.1481);transform-origin:0 0;">€27.5</div>
<div class="t" style="left:524.0px;top:524.1px;font-size:11px;line-height:11px;font-family:'Liberation Sans',sans-serif;font-weight:normal;color:#f8cfc6;transform:scaleX(1.1250);transform-origin:0 0;">€123</div>
<div class="t" style="left:537.0px;top:569.6px;font-size:11px;line-height:11px;font-family:'Liberation Sans',sans-serif;font-weight:normal;color:#e4e4e4;transform:scaleX(1.0741);transform-origin:0 0;">€85.3</div>
<div class="t" style="left:541.5px;top:600.6px;font-size:11px;line-height:11px;font-family:'Liberation Sans',sans-serif;font-weight:normal;color:#dccdea;transform:scaleX(1.1556);transform-origin:0 0;">€34.9</div>
<div class="t" style="left:339.0px;top:579.1px;font-size:11px;line-height:11px;font-family:'Liberation Sans',sans-serif;font-weight:normal;color:#cdeed6;transform:scaleX(1.0529);transform-origin:0 0;">€442.4</div>
<div class="t" style="left:471.0px;top:669.4px;font-size:11px;line-height:11px;font-family:'Liberation Sans',sans-serif;font-weight:normal;color:#f2f6d6;transform:scaleX(1.1455);transform-origin:0 0;">€378.9</div>
<div class="t" style="left:185.4px;top:460.7px;font-size:11.6px;line-height:11.6px;font-family:'Liberation Sans',sans-serif;font-weight:bold;color:#e4b64e;transform:scaleX(0.9868);transform-origin:0 0;">I. SINGLE MARKET,</div>
<div class="t" style="left:185.4px;top:474.1px;font-size:11.6px;line-height:11.6px;font-family:'Liberation Sans',sans-serif;font-weight:bold;color:#e4b64e;transform:scaleX(1.0110);transform-origin:0 0;">INNOVATION AND DIGITAL</div>
<div class="t" style="left:186.4px;top:488.5px;font-size:12px;line-height:12px;font-family:'Liberation Sans',sans-serif;font-weight:normal;color:#efd9a2;transform:scaleX(0.9622);transform-origin:0 0;">€187.4</div>
<div class="t" style="left:184.4px;top:615.7px;font-size:11.6px;line-height:11.6px;font-family:'Liberation Sans',sans-serif;font-weight:bold;color:#45a36b;transform:scaleX(1.0059);transform-origin:0 0;">II. COHESION AND</div>
<div class="t" style="left:185.4px;top:630.1px;font-size:11.6px;line-height:11.6px;font-family:'Liberation Sans',sans-serif;font-weight:bold;color:#45a36b;transform:scaleX(0.9587);transform-origin:0 0;">VALUES</div>
<div class="t" style="left:185.4px;top:644.1px;font-size:12px;line-height:12px;font-family:'Liberation Sans',sans-serif;font-weight:normal;color:#8fcaa2;transform:scaleX(0.9622);transform-origin:0 0;">€442.4</div>
<div class="t" style="left:184.4px;top:762.5px;font-size:11.6px;line-height:11.6px;font-family:'Liberation Sans',sans-serif;font-weight:bold;color:#bdd26c;transform:scaleX(0.9767);transform-origin:0 0;">III. NATURAL RESOURCES</div>
<div class="t" style="left:185.4px;top:776.9px;font-size:11.6px;line-height:11.6px;font-family:'Liberation Sans',sans-serif;font-weight:bold;color:#bdd26c;transform:scaleX(0.9702);transform-origin:0 0;">AND ENVIRONMENT</div>
<div class="t" style="left:185.4px;top:790.8px;font-size:12px;line-height:12px;font-family:'Liberation Sans',sans-serif;font-weight:normal;color:#d6e4a2;transform:scaleX(0.9889);transform-origin:0 0;">€378.9</div>
<div class="t" style="left:414.4px;top:760.7px;font-size:11.6px;line-height:11.6px;font-family:'Liberation Sans',sans-serif;font-weight:bold;color:#5d3b88;transform:scaleX(1.0056);transform-origin:0 0;">IV. MIGRATION AND</div>
<div class="t" style="left:414.5px;top:775.1px;font-size:11.6px;line-height:11.6px;font-family:'Liberation Sans',sans-serif;font-weight:bold;color:#5d3b88;transform:scaleX(0.9431);transform-origin:0 0;">BORDER MANAGEMENT</div>
<div class="t" style="left:415.4px;top:789.1px;font-size:12px;line-height:12px;font-family:'Liberation Sans',sans-serif;font-weight:normal;color:#7a6a94;transform:scaleX(0.9533);transform-origin:0 0;">€34.9</div>
<div class="t" style="left:638.3px;top:460.1px;font-size:11.6px;line-height:11.6px;font-family:'Liberation Sans',sans-serif;font-weight:bold;color:#2f679f;transform:scaleX(0.9676);transform-origin:0 0;">V. SECURITY</div>
<div class="t" style="left:638.3px;top:473.5px;font-size:11.6px;line-height:11.6px;font-family:'Liberation Sans',sans-serif;font-weight:bold;color:#2f679f;transform:scaleX(0.9405);transform-origin:0 0;">AND DEFENCE</div>
<div class="t" style="left:638.3px;top:487.8px;font-size:12px;line-height:12px;font-family:'Liberation Sans',sans-serif;font-weight:normal;color:#6c8fb5;transform:scaleX(0.9567);transform-origin:0 0;">€27.5</div>
<div class="t" style="left:638.7px;top:612.1px;font-size:11.6px;line-height:11.6px;font-family:'Liberation Sans',sans-serif;font-weight:bold;color:#c9624f;transform:scaleX(0.9724);transform-origin:0 0;">VI. NEIGHBOURHOOD</div>
<div class="t" style="left:638.7px;top:626.6px;font-size:11.6px;line-height:11.6px;font-family:'Liberation Sans',sans-serif;font-weight:bold;color:#c9624f;transform:scaleX(0.9592);transform-origin:0 0;">AND THE WORLD</div>
<div class="t" style="left:638.7px;top:640.8px;font-size:12px;line-height:12px;font-family:'Liberation Sans',sans-serif;font-weight:normal;color:#dc9d92;transform:scaleX(1.0115);transform-origin:0 0;">€123</div>
<div class="t" style="left:638.7px;top:759.3px;font-size:11.6px;line-height:11.6px;font-family:'Liberation Sans',sans-serif;font-weight:bold;color:#8e8e8e;transform:scaleX(0.9682);transform-origin:0 0;">VII. EUROPEAN PUBLIC</div>
<div class="t" style="left:638.7px;top:773.1px;font-size:11.6px;line-height:11.6px;font-family:'Liberation Sans',sans-serif;font-weight:bold;color:#8e8e8e;transform:scaleX(0.9798);transform-origin:0 0;">ADMINISTRATION</div>
<div class="t" style="left:638.7px;top:787.8px;font-size:12px;line-height:12px;font-family:'Liberation Sans',sans-serif;font-weight:normal;color:#b2b2b2;transform:scaleX(0.9433);transform-origin:0 0;">€85.3</div>
<div class="t" style="left:141.8px;top:508.2px;font-size:12px;line-height:12px;font-family:'Liberation Sans',sans-serif;font-weight:bold;color:#e6bf6a;transform:scaleX(1.0333);transform-origin:0 0;">1</div>
<div class="t" style="left:152.1px;top:508.2px;font-size:12px;line-height:12px;font-family:'Liberation Sans',sans-serif;font-weight:normal;color:#55555e;transform:scaleX(0.9318);transform-origin:0 0;-webkit-text-stroke:0.25px #5a5a62">Research and Innovation</div>
<div class="t" style="left:142.8px;top:528.1px;font-size:12px;line-height:12px;font-family:'Liberation Sans',sans-serif;font-weight:bold;color:#e6bf6a;transform:scaleX(1.0333);transform-origin:0 0;">2</div>
<div class="t" style="left:152.1px;top:528.1px;font-size:12px;line-height:12px;font-family:'Liberation Sans',sans-serif;font-weight:normal;color:#55555e;transform:scaleX(0.9438);transform-origin:0 0;-webkit-text-stroke:0.25px #5a5a62">European Strategic Investments</div>
<div class="t" style="left:141.6px;top:547.2px;font-size:12px;line-height:12px;font-family:'Liberation Sans',sans-serif;font-weight:bold;color:#e6bf6a;transform:scaleX(1.2400);transform-origin:0 0;">3</div>
<div class="t" style="left:152.1px;top:547.2px;font-size:12px;line-height:12px;font-family:'Liberation Sans',sans-serif;font-weight:normal;color:#55555e;transform:scaleX(0.9444);transform-origin:0 0;-webkit-text-stroke:0.25px #5a5a62">Single Market</div>
<div class="t" style="left:142.8px;top:565.8px;font-size:12px;line-height:12px;font-family:'Liberation Sans',sans-serif;font-weight:bold;color:#e6bf6a;transform:scaleX(0.8857);transform-origin:0 0;">4</div>
<div class="t" style="left:152.1px;top:565.8px;font-size:12px;line-height:12px;font-family:'Liberation Sans',sans-serif;font-weight:normal;color:#55555e;transform:scaleX(0.9091);transform-origin:0 0;-webkit-text-stroke:0.25px #5a5a62">Space</div>
<div class="t" style="left:141.0px;top:667.8px;font-size:12px;line-height:12px;font-family:'Liberation Sans',sans-serif;font-weight:bold;color:#45a36b;transform:scaleX(1.0333);transform-origin:0 0;">5</div>
<div class="t" style="left:151.1px;top:667.8px;font-size:12px;line-height:12px;font-family:'Liberation Sans',sans-serif;font-weight:normal;color:#55555e;transform:scaleX(0.9289);transform-origin:0 0;-webkit-text-stroke:0.25px #5a5a62">Regional Development and Cohesion</div>
<div class="t" style="left:142.0px;top:686.2px;font-size:12px;line-height:12px;font-family:'Liberation Sans',sans-serif;font-weight:bold;color:#45a36b;transform:scaleX(1.0333);transform-origin:0 0;">6</div>
<div class="t" style="left:151.1px;top:686.2px;font-size:12px;line-height:12px;font-family:'Liberation Sans',sans-serif;font-weight:normal;color:#55555e;transform:scaleX(0.9325);transform-origin:0 0;-webkit-text-stroke:0.25px #5a5a62">Economic and Monetary Union</div>
<div class="t" style="left:142.0px;top:707.8px;font-size:12px;line-height:12px;font-family:'Liberation Sans',sans-serif;font-weight:bold;color:#45a36b;transform:scaleX(1.0333);transform-origin:0 0;">7</div>
<div class="t" style="left:151.1px;top:707.8px;font-size:12px;line-height:12px;font-family:'Liberation Sans',sans-serif;font-weight:normal;color:#55555e;transform:scaleX(0.9417);transform-origin:0 0;-webkit-text-stroke:0.25px #5a5a62">Investing in People,</div>
<div class="t" style="left:151.1px;top:720.0px;font-size:12px;line-height:12px;font-family:'Liberation Sans',sans-serif;font-weight:normal;color:#55555e;transform:scaleX(0.9257);transform-origin:0 0;-webkit-text-stroke:0.25px #5a5a62">Social Cohesion and Values</div>
<div class="t" style="left:142.0px;top:811.4px;font-size:12px;line-height:12px;font-family:'Liberation Sans',sans-serif;font-weight:bold;color:#c6da72;transform:scaleX(1.0333);transform-origin:0 0;">8</div>
<div class="t" style="left:152.0px;top:811.4px;font-size:12px;line-height:12px;font-family:'Liberation Sans',sans-serif;font-weight:normal;color:#55555e;transform:scaleX(0.9398);transform-origin:0 0;-webkit-text-stroke:0.25px #5a5a62">Agriculture and Maritime Policy</div>
<div class="t" style="left:370.3px;top:810.8px;font-size:12px;line-height:12px;font-family:'Liberation Sans',sans-serif;font-weight:bold;color:#5d3b88;">10</div>
<div class="t" style="left:388.7px;top:810.8px;font-size:12px;line-height:12px;font-family:'Liberation Sans',sans-serif;font-weight:normal;color:#55555e;transform:scaleX(0.9625);transform-origin:0 0;-webkit-text-stroke:0.25px #5a5a62">Migration</div>
<div class="t" style="left:593.8px;top:508.2px;font-size:12px;line-height:12px;font-family:'Liberation Sans',sans-serif;font-weight:bold;color:#2f679f;">12</div>
<div class="t" style="left:611.1px;top:508.2px;font-size:12px;line-height:12px;font-family:'Liberation Sans',sans-serif;font-weight:normal;color:#55555e;transform:scaleX(0.9429);transform-origin:0 0;-webkit-text-stroke:0.25px #5a5a62">Security</div>
<div class="t" style="left:593.8px;top:528.1px;font-size:12px;line-height:12px;font-family:'Liberation Sans',sans-serif;font-weight:bold;color:#2f679f;">13</div>
<div class="t" style="left:611.1px;top:528.1px;font-size:12px;line-height:12px;font-family:'Liberation Sans',sans-serif;font-weight:normal;color:#55555e;transform:scaleX(0.9302);transform-origin:0 0;-webkit-text-stroke:0.25px #5a5a62">Defence</div>
<div class="t" style="left:593.8px;top:547.2px;font-size:12px;line-height:12px;font-family:'Liberation Sans',sans-serif;font-weight:bold;color:#2f679f;">14</div>
<div class="t" style="left:611.1px;top:547.2px;font-size:12px;line-height:12px;font-family:'Liberation Sans',sans-serif;font-weight:normal;color:#55555e;transform:scaleX(0.8953);transform-origin:0 0;-webkit-text-stroke:0.25px #5a5a62">Crisis Response</div>
<div class="t" style="left:593.8px;top:660.6px;font-size:12px;line-height:12px;font-family:'Liberation Sans',sans-serif;font-weight:bold;color:#d2846f;">15</div>
<div class="t" style="left:612.8px;top:660.6px;font-size:12px;line-height:12px;font-family:'Liberation Sans',sans-serif;font-weight:normal;color:#55555e;transform:scaleX(0.9462);transform-origin:0 0;-webkit-text-stroke:0.25px #5a5a62">External Action</div>
<div class="t" style="left:593.8px;top:680.0px;font-size:12px;line-height:12px;font-family:'Liberation Sans',sans-serif;font-weight:bold;color:#d2846f;">16</div>
<div class="t" style="left:612.8px;top:680.0px;font-size:12px;line-height:12px;font-family:'Liberation Sans',sans-serif;font-weight:normal;color:#55555e;transform:scaleX(0.9131);transform-origin:0 0;-webkit-text-stroke:0.25px #5a5a62">Pre-Accession Assistance</div>
<div class="t" style="left:593.8px;top:810.8px;font-size:12px;line-height:12px;font-family:'Liberation Sans',sans-serif;font-weight:bold;color:#777;">17</div>
<div class="t" style="left:612.1px;top:810.8px;font-size:12px;line-height:12px;font-family:'Liberation Sans',sans-serif;font-weight:normal;color:#55555e;transform:scaleX(0.9364);transform-origin:0 0;-webkit-text-stroke:0.25px #5a5a62">European Public Administration</div>
<div class="a" style="left:0;top:820px;width:993px;height:47px;background:#000"></div>
<svg style="left:228px;top:828px" width="22" height="22" viewBox="228 828 22 22">
<circle cx="236" cy="833.6" r="2.3" fill="none" stroke="#e4e4e4" stroke-width="1.5"/>
<path d="M239.5 839.3 Q233.5 838.3 232.8 842.5 Q232.8 847 238.5 846.6" fill="none" stroke="#e4e4e4" stroke-width="1.6"/>
<circle cx="243" cy="837.2" r="2.2" fill="none" stroke="#e4e4e4" stroke-width="1.5"/>
<rect x="238.8" y="841.2" width="8.8" height="5.6" rx="2.8" fill="none" stroke="#e4e4e4" stroke-width="1.5"/>
</svg>
<svg style="left:280px;top:836px" width="8" height="6" viewBox="0 0 8 6"><path d="M1.2 4.5L4 1.7L6.8 4.5" fill="none" stroke="#e0e0e0" stroke-width="1.8"/></svg>
<svg style="left:356px;top:836px" width="8" height="6" viewBox="0 0 8 6"><path d="M1.2 4.5L4 1.7L6.8 4.5" fill="none" stroke="#e0e0e0" stroke-width="1.8"/></svg>
<svg style="left:424.5px;top:836px" width="8" height="6" viewBox="0 0 8 6"><path d="M1.2 4.5L4 1.7L6.8 4.5" fill="none" stroke="#e0e0e0" stroke-width="1.8"/></svg>
<svg style="left:508.29999999999995px;top:836px" width="8" height="6" viewBox="0 0 8 6"><path d="M1.2 4.5L4 1.7L6.8 4.5" fill="none" stroke="#e0e0e0" stroke-width="1.8"/></svg>
<svg style="left:322px;top:830px" width="21" height="19" viewBox="0 0 21 19">
<path d="M3.5 1.2 H17.5 Q19.8 1.2 19.8 3.5 V11 Q19.8 13.3 17.5 13.3 H8 L4 17 V13.3 H3.5 Q1.2 13.3 1.2 11 V3.5 Q1.2 1.2 3.5 1.2 Z" fill="none" stroke="#e8e8e8" stroke-width="1.6" stroke-linejoin="round"/>
</svg>
<svg style="left:393px;top:830px" width="22" height="18" viewBox="0 0 22 18">
<path transform="rotate(-14 11 9)" d="M11 16.5 L4 10.5 Q1 7.5 1.8 4.5 Q3 1.3 6.5 1.5 Q9.5 1.8 11 4.5 Q12.5 1.8 15.5 1.5 Q19 1.3 20.2 4.5 Q21 7.5 18 10.5 Z" fill="none" stroke="#e8e8e8" stroke-width="1.7" stroke-linejoin="round"/>
</svg>
<svg style="left:469px;top:830px" width="23" height="18" viewBox="0 0 23 18">
<rect x="1.3" y="1.3" width="20" height="15" rx="1.5" fill="none" stroke="#e8e8e8" stroke-width="1.6"/>
<path d="M11.3 13 V4.5 M7.8 8 L11.3 4.5 L14.8 8" fill="none" stroke="#e8e8e8" stroke-width="1.6"/>
</svg>
<svg style="left:546px;top:828px" width="23" height="23" viewBox="0 0 23 23">
<circle cx="11.5" cy="11.5" r="10" fill="none" stroke="#e8e8e8" stroke-width="1.6"/>
<circle cx="7" cy="11.5" r="1.3" fill="#e8e8e8"/><circle cx="11.5" cy="11.5" r="1.3" fill="#e8e8e8"/><circle cx="16" cy="11.5" r="1.3" fill="#e8e8e8"/>
</svg>
<svg style="left:936px;top:824px" width="30" height="28" viewBox="936 824 30 28">
<path d="M953.2 829.2 H960.8 V847.8 H953.2 Z" fill="#1a0408" stroke="#a81a3a" stroke-width="1.6"/>
<circle cx="948.6" cy="834.2" r="2.6" fill="none" stroke="#dedede" stroke-width="1.4"/>
<path d="M945.5 838.2 Q948.5 836.6 951 838 L953.3 841.3 L951.8 842.4 L950.3 840.8 L950.2 843.4 L952 848.3 L949.8 848.8 L948.2 845 L946.5 848.8 L944.2 848.2 L946.2 842.8 L945.3 841.8 L943.6 843.4 L942.5 842.2 Z" fill="none" stroke="#dedede" stroke-width="1.3" stroke-linejoin="round"/>
</svg>
<div class="t" style="left:253.0px;top:832.0px;font-size:10px;line-height:10px;font-family:'Liberation Sans',sans-serif;font-weight:bold;color:#b4b4b4;transform:scaleX(1.0337);transform-origin:0 0;">70</div>
<div class="t" style="left:212.7px;top:852.7px;font-size:10.8px;line-height:10.8px;font-family:'Liberation Sans',sans-serif;font-weight:bold;color:#f0f0f0;transform:scaleX(0.8574);transform-origin:0 0;">Participants</div>
<div class="t" style="left:321.8px;top:852.7px;font-size:10.8px;line-height:10.8px;font-family:'Liberation Sans',sans-serif;font-weight:bold;color:#f0f0f0;transform:scaleX(0.8750);transform-origin:0 0;">Chat</div>
<div class="t" style="left:391.6px;top:852.7px;font-size:10.8px;line-height:10.8px;font-family:'Liberation Sans',sans-serif;font-weight:bold;color:#f0f0f0;transform:scaleX(0.8667);transform-origin:0 0;">React</div>
<div class="t" style="left:467.3px;top:852.7px;font-size:10.8px;line-height:10.8px;font-family:'Liberation Sans',sans-serif;font-weight:bold;color:#f0f0f0;transform:scaleX(0.8496);transform-origin:0 0;">Share</div>
<div class="t" style="left:546.0px;top:852.7px;font-size:10.8px;line-height:10.8px;font-family:'Liberation Sans',sans-serif;font-weight:bold;color:#f0f0f0;transform:scaleX(0.8761);transform-origin:0 0;">More</div>
<div class="t" style="left:938.0px;top:852.7px;font-size:10.8px;line-height:10.8px;font-family:'Liberation Sans',sans-serif;font-weight:bold;color:#f0f0f0;transform:scaleX(0.8490);transform-origin:0 0;">Leave</div>
</body></html>
